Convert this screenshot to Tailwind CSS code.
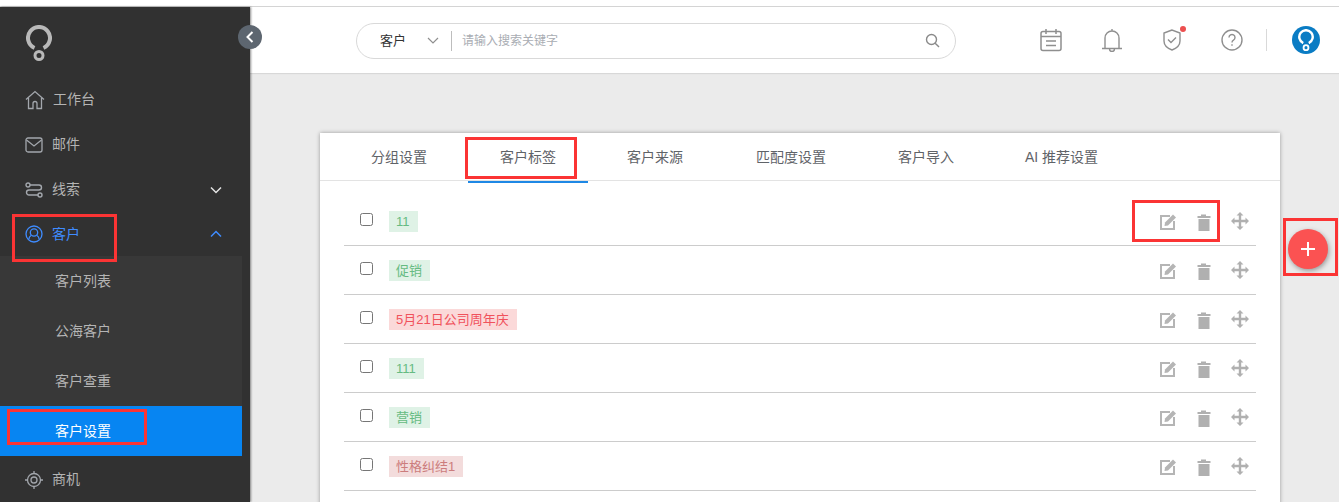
<!DOCTYPE html>
<html lang="en">

<head>
    <meta charset="UTF-8">
    <title>客户设置</title>
    <script src="https://cdn.jsdelivr.net/npm/@tailwindcss/browser@4"></script>
</head>

<body class="w-[1339px] h-[502px] overflow-hidden bg-white font-['Liberation_Sans','Noto_Sans_CJK_SC',sans-serif]">
    <div class="relative w-[1339px] h-[502px] overflow-hidden">
        <div class="h-[6px] bg-white"></div>
        <div class="h-px bg-[#d4d4d4]"></div>
        <div class="flex h-[495px]">
            <!-- sidebar -->
            <aside class="w-[250px] shrink-0 bg-[#313131] shadow-[1px_0_2px_rgba(0,0,0,0.45)] z-10">
                <div class="h-[70px] pl-[26px] pt-[18px]">
                    <svg width="26" height="36" viewBox="0 0 26 36" fill="none" stroke="#b9b9b9">
                        <path d="M8.500 23 A11 11 0 1 1 17.500 23" stroke-width="4" />
                        <circle cx="13" cy="30.500" r="4" stroke-width="3" />
                    </svg>
                </div>
                <nav class="text-[14px] text-[#b4b4b4]">
                    <a class="flex items-center h-[45px] pl-[25px] gap-[8px]">
                        <svg width="20" height="20" viewBox="0 0 20 20" fill="none" stroke="#a3a7ad" stroke-width="1.300">
                            <path d="M1 9.500 10 1.500l9 8M3.500 8v10.500h4.500v-5a2 2 0 0 1 4 0v5h4.500V8" />
                        </svg>
                        工作台
                    </a>
                    <a class="flex items-center h-[45px] pl-[25px] gap-[9px]">
                        <svg width="18" height="16" viewBox="0 0 18 16" fill="none" stroke="#a3a7ad" stroke-width="1.300">
                            <rect x="1" y="1" width="16" height="14" rx="2" />
                            <path d="M1.500 3 9 9l7.500-6" />
                        </svg>
                        邮件
                    </a>
                    <a class="flex items-center h-[45px] pl-[25px] gap-[9px]">
                        <svg width="18" height="16" viewBox="0 0 18 16" fill="none" stroke="#a3a7ad" stroke-width="1.400">
                            <circle cx="3" cy="3" r="2" />
                            <circle cx="15" cy="13" r="2" />
                            <path d="M5 3h9a2.500 2.500 0 0 1 0 5H4a2.500 2.500 0 0 0 0 5h9" />
                        </svg>
                        线索
                        <svg class="ml-auto mr-[28px]" width="12" height="8" viewBox="0 0 12 8" fill="none" stroke="#e4e4e4" stroke-width="1.500">
                            <path d="M1 1.500 6 6.500l5-5" />
                        </svg>
                    </a>
                    <a class="flex items-center h-[44px] pl-[25px] gap-[9px] text-[#3f8cff]">
                        <svg width="18" height="18" viewBox="0 0 18 18" fill="none" stroke="#3f8cff" stroke-width="1.300">
                            <circle cx="9" cy="9" r="8" />
                            <circle cx="9" cy="7.500" r="3.700" />
                            <path d="M6.300 10.200c-1.500.8-2.400 2.200-2.500 4.200M11.700 10.200c1.500.8 2.400 2.200 2.500 4.200" />
                        </svg>
                        客户
                        <svg class="ml-auto mr-[28px]" width="12" height="8" viewBox="0 0 12 8" fill="none" stroke="#3f8cff" stroke-width="1.500">
                            <path d="M1 6.500 6 1.500l5 5" />
                        </svg>
                    </a>
                    <div class="w-[242px] bg-[#383838]">
                        <a class="flex items-center h-[50px] pl-[55px]">客户列表</a>
                        <a class="flex items-center h-[50px] pl-[55px]">公海客户</a>
                        <a class="flex items-center h-[50px] pl-[55px]">客户查重</a>
                        <a class="flex items-center h-[50px] pl-[55px] bg-[#0785f2] text-white">客户设置</a>
                    </div>
                    <a class="flex items-center h-[47px] pl-[25px] gap-[9px]">
                        <svg width="18" height="18" viewBox="0 0 18 18" fill="none" stroke="#a3a7ad" stroke-width="1.300">
                            <circle cx="9" cy="9" r="6.500" />
                            <circle cx="9" cy="9" r="3" />
                            <path d="M9 0v2.500M9 15.500V18M0 9h2.500M15.500 9H18" />
                        </svg>
                        商机
                    </a>
                </nav>
            </aside>

            <main class="flex-1 min-w-0 bg-[#ebebeb]">
                <!-- header -->
                <header class="relative h-[66px] bg-white shadow-[0_1px_1px_rgba(0,0,0,0.08)] flex items-center">
                    <div class="ml-[106px] w-[600px] h-[36px] mt-[1px] rounded-[18px] border border-[#d9d9d9] flex items-center">
                        <span class="ml-[23px] w-[28px] text-[13px] text-[#333]">客户</span>
                        <svg class="ml-[19px]" width="12" height="7" viewBox="0 0 12 7" fill="none" stroke="#8f8f8f" stroke-width="1.200">
                            <path d="M1 1 6 6l5-5" />
                        </svg>
                        <span class="ml-[12px] w-px h-[20px] bg-[#bdbdbd]"></span>
                        <span class="ml-[10px] text-[12px] text-[#a9adb3]">请输入搜索关键字</span>
                        <svg class="ml-auto mr-[15px]" width="15" height="15" viewBox="0 0 15 15" fill="none" stroke="#8a8a8a" stroke-width="1.400">
                            <circle cx="6.500" cy="6.500" r="5" />
                            <path d="m10.200 10.200 3.800 3.800" />
                        </svg>
                    </div>
                    <div class="ml-[84px] -mt-[1px] flex items-center">
                        <svg width="22" height="24" viewBox="0 0 22 24" fill="none" stroke="#8f8f8f" stroke-width="1.500">
                            <rect x="1" y="3.500" width="20" height="19" rx="2" />
                            <path d="M1 8.500h20M6 1v5M16 1v5M6 13h10M6 17.500h10" />
                        </svg>
                        <svg class="ml-[40px]" width="20" height="24" viewBox="0 0 20 24" fill="none" stroke="#8f8f8f" stroke-width="1.400">
                            <path d="M0 20.500h20M3 20.500V10a7 7 0 0 1 14 0v10.500M10 1v2M7.500 21a2.500 2.500 0 0 0 5 0" />
                        </svg>
                        <span class="relative ml-[41px] flex">
                            <svg width="18" height="22" viewBox="0 0 18 22" fill="none" stroke="#8f8f8f" stroke-width="1.400">
                                <path d="M9 1 1 4v8c0 4.500 4 7.500 8 9 4-1.500 8-4.500 8-9V4zM5 10.500l3 3 5-5" />
                            </svg>
                            <span class="absolute -top-[3px] right-[-5px] w-[6px] h-[6px] rounded-full bg-[#ec4f4f]"></span>
                        </span>
                        <svg class="ml-[40px]" width="22" height="22" viewBox="0 0 22 22" fill="none" stroke="#8f8f8f" stroke-width="1.400">
                            <circle cx="11" cy="11" r="10" />
                            <path d="M8 8.500a3 3 0 1 1 4.500 2.600c-1 .6-1.500 1.200-1.500 2.400M11 15.200v1.600" />
                        </svg>
                        <span class="ml-[23px] w-px h-[22px] bg-[#d9d9d9]"></span>
                        <span class="ml-[25px] w-[28px] h-[28px] rounded-full bg-[#0a7cc4] flex items-center justify-center">
                            <svg width="16" height="22" viewBox="0 0 26 36" fill="none" stroke="#fff">
                                <path d="M8.500 23 A11 11 0 1 1 17.500 23" stroke-width="4" />
                                <circle cx="13" cy="30.500" r="4" stroke-width="3" />
                            </svg>
                        </span>
                    </div>
                </header>

                <!-- card -->
                <section class="ml-[70px] mt-[60px] w-[960px] h-[400px] bg-white shadow-[0_0_4px_rgba(0,0,0,0.35)]">
                    <div class="flex h-[48px] border-b border-[#e3e3e3] text-[14px] text-[#5f6368]">
                        <a class="w-[148px] pl-[51px] pt-[14px]">分组设置</a>
                        <a class="w-[120px] h-[50px] text-center pt-[14px] border-b-2 border-[#1e88e5]">客户标签</a>
                        <a class="ml-[39px] w-[129px] pt-[14px]">客户来源</a>
                        <a class="w-[142px] pt-[14px]">匹配度设置</a>
                        <a class="w-[127px] pt-[14px]">客户导入</a>
                        <a class="pt-[14px]">AI 推荐设置</a>
                    </div>
                    <ul id="tags" class="mx-[24px] mt-[16px]"></ul>
                </section>
            </main>
        </div>

        <!-- sidebar collapse button -->
        <button class="absolute left-[238px] top-[25px] z-20 w-[24px] h-[24px] rounded-full bg-[#5d6670] flex items-center justify-center">
            <svg width="8" height="12" viewBox="0 0 8 12" fill="none" stroke="#fff" stroke-width="2"><path d="M6.500 1 1.500 6l5 5" /></svg>
        </button>

        <!-- floating add -->
        <button class="absolute left-[1288px] top-[229px] z-20 w-[40px] h-[40px] rounded-full bg-[#fb5252] shadow-[1px_2px_5px_rgba(0,0,0,0.35)] flex items-center justify-center">
            <svg width="16" height="16" viewBox="0 0 16 16" stroke="#fff" stroke-width="2"><path d="M8 1v14M1 8h14" /></svg>
        </button>

        <!-- red annotation boxes -->
        <div class="absolute z-30 left-[12px] top-[214px] w-[105px] h-[48px] border-[3px] border-[#fb3434]"></div>
        <div class="absolute z-30 left-[7px] top-[409px] w-[140px] h-[36px] border-[3px] border-[#fb3434]"></div>
        <div class="absolute z-30 left-[465px] top-[137px] w-[112px] h-[42px] border-[3px] border-[#fb3434]"></div>
        <div class="absolute z-30 left-[1132px] top-[200px] w-[88px] h-[42px] border-[3px] border-[#fb3434]"></div>
        <div class="absolute z-30 left-[1283px] top-[218px] w-[55px] h-[58px] border-[3px] border-[#fb3434]"></div>
    </div>

    <script>
        const tags = [
            { name: '11', color: 'bg-[#dff2e6] text-[#66bb82]' },
            { name: '促销', color: 'bg-[#dff2e6] text-[#66bb82]' },
            { name: '5月21日公司周年庆', color: 'bg-[#fbd9d9] text-[#f0525c]' },
            { name: '111', color: 'bg-[#dff2e6] text-[#66bb82]' },
            { name: '营销', color: 'bg-[#dff2e6] text-[#66bb82]' },
            { name: '性格纠结1', color: 'bg-[#f3dcdc] text-[#cc7d7d]' }
        ];

        document.getElementById('tags').innerHTML = tags.map(tag => `
            <li class="flex items-center h-[49px] border-b border-[#cccccc] pl-[16px]">
                <input type="checkbox" class="w-[13px] h-[13px] mb-[4px] accent-[#1e88e5]">
                <span class="ml-[16px] h-[21px] leading-[21px] pl-[7px] pr-[8px] text-[13px] ${tag.color}">${tag.name}</span>
                <span class="ml-auto mr-[7px] flex items-center gap-[18px] mt-[2px]">
                    <svg width="18" height="18" viewBox="0 0 18 18"><path fill="none" stroke="#b5b5b5" stroke-width="2" d="M11 3H2v13h13V8" /><path fill="#b5b5b5" d="M6 9.500 14 1.500 17 4.500 9 12.500 5.500 13z" /></svg>
                    <svg width="18" height="18" viewBox="0 0 18 18" fill="#b0b0b0"><path d="M2.500 3H6V1.500h5V3h4.500v2h-13zM3.500 6h11v12h-11z" /></svg>
                    <svg class="-mt-[3px]" width="18" height="18" viewBox="0 0 18 18" fill="#b0b0b0"><path d="M9 0l3.500 3.500h-2.300v4.300h4.300V5.500L18 9l-3.500 3.500v-2.300h-4.300v4.300h2.300L9 18l-3.500-3.500h2.300v-4.300H3.500v2.300L0 9l3.500-3.500v2.300h4.300V3.500H5.500z" /></svg>
                </span>
            </li>`).join('');
    </script>
</body>

</html>
